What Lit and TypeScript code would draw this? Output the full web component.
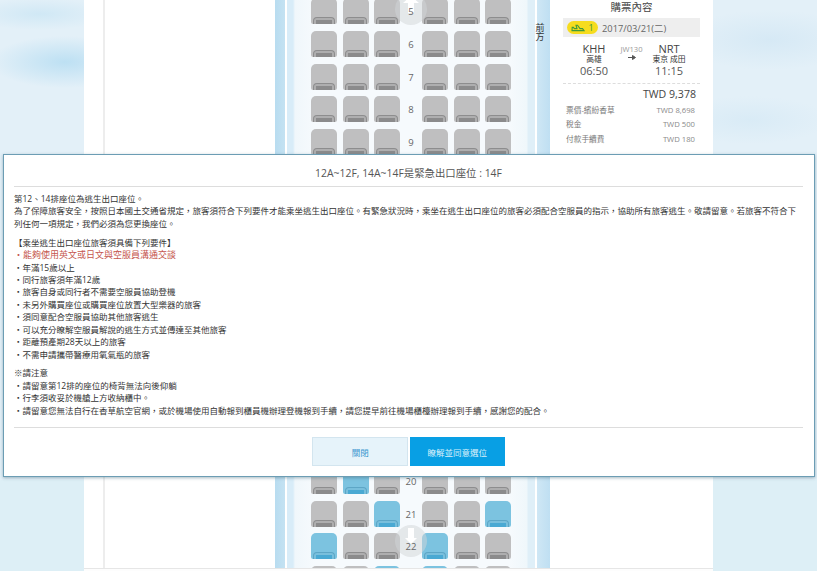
import { LitElement, html, css, svg } from "lit";
import { customElement } from "lit/decorators.js";

const BLUE: Record<number, number[]> = { 20: [1], 21: [2, 5], 22: [0, 3], 23: [2, 3] };
const UPPER_ROWS = [5, 6, 7, 8, 9];
const LOWER_ROWS = [20, 21, 22, 23];
const CJK = css`"Open Sans", "Noto Sans CJK TC", "Noto Sans", sans-serif`;

@customElement("seat-row")
class SeatRow extends LitElement {
  static properties = { row: { type: Number } };
  row = 0;
  static styles = css`
    :host { display: flex; height: 26px; padding-left: 36px; }
    .side { display: flex; gap: 5.5px; }
    .num { width: 22px; text-align: center; font: 9.5px/27px ${CJK}; color: #666; position: relative; z-index: 1; }
    .num span { position: relative; }
    .seat { width: 26px; height: 26px; background: #bfbfc0; border-radius: 5px 5px 2px 2px; position: relative; overflow: hidden; }
    .seat::before { content: ""; position: absolute; left: 2px; right: 2px; bottom: 0; height: 7px; border: 1px solid #8d8d8e; border-bottom: 0; border-radius: 4px 4px 0 0; box-sizing: border-box; background: #aeaeaf; }
    .seat::after { content: ""; position: absolute; left: 5px; right: 5px; bottom: 0; height: 4px; background: #8b8b8c; }
    .seat.free { background: #7cc3e0; }
    .seat.free::before { border-color: #5da6c6; background: #79bfdc; }
    .seat.free::after { background: #4aa9d3; }
    .exit { position: absolute; left: -5px; top: 50%; margin-top: -18px; width: 32px; height: 32px; display: block; }
    .exit.rear { margin-top: -21px; }
  `;
  seat(i: number) {
    const free = (BLUE[this.row] || []).includes(i);
    return html`<div class="seat ${free ? "free" : ""}"></div>`;
  }
  render() {
    const front = this.row === 5;
    const rear = this.row === 22;
    return html`
      <div class="side">${[0, 1, 2].map((i) => this.seat(i))}</div>
      <div class="num">
        ${front || rear
          ? html`<svg class="exit ${rear ? "rear" : ""}" viewBox="0 0 32 32">
              <circle cx="16" cy="16" r="16" fill="#d2d6d8" fill-opacity=".5"></circle>
              ${front
                ? svg`<path d="M16 3 L24 10 H19 V20 H13 V10 H8 Z" fill="#fff"></path>`
                : svg`<path d="M13 3 H19 V13 H22 L16 19 L10 13 H13 Z" fill="#fff"></path>`}
            </svg>`
          : ""}
        ${this.row < 23 ? html`<span>${this.row}</span>` : ""}
      </div>
      <div class="side">${[3, 4, 5].map((i) => this.seat(i))}</div>
    `;
  }
}

@customElement("app-root")
class AppRoot extends LitElement {
  static styles = css`
    :host { display: block; width: 817px; height: 571px; position: relative; overflow: hidden; background: #ddeff6; font-family: ${CJK}; }
    .sky { position: absolute; left: 0; right: 0; top: 0; height: 480px;
      background:
        radial-gradient(ellipse 75px 26px at 65px 62px, #bde0f3 0%, rgba(189,224,243,0) 100%),
        radial-gradient(ellipse 70px 16px at 40px 14px, #d0e8f5 0%, rgba(208,232,245,0) 100%),
        radial-gradient(ellipse 90px 30px at 770px 40px, #d6e9f5 0%, rgba(214,233,245,0) 100%),
        radial-gradient(ellipse 80px 24px at 750px 120px, #d9ebf6 0%, rgba(217,235,246,0) 100%),
        #e3f0f8; }
    .page { position: absolute; left: 84px; top: 0; width: 629px; height: 571px; background: #fff; display: flex; flex-direction: column; }
    .main { display: flex; height: 568px; overflow: hidden; }
    .foot { flex: 1; border-top: 1px solid #e6e6e6; background: #fdfdfd; }
    .left { width: 191px; flex: none; box-sizing: border-box; padding-left: 19px; }
    .left i { display: block; height: 100%; width: 1.5px; background: #ededed; }
    .cabin { width: 275px; flex: none; position: relative; box-sizing: border-box;
      background: linear-gradient(90deg, #b8dcf0 0, #c4e2f2 10px, #fff 10px, #fff 11.5px, #d8ecf8 12px, #d8ecf8 18px, #f0f7fb 20px, #f6fafd 40px, #f6fafd 235px, #eff7fb 252px, #dfeff8 253px, #dfeff8 260px, #fff 260.5px, #fff 261.5px, #cfe7f5 262px, #bfdff2 275px); }
    .rows { display: flex; flex-direction: column; gap: 6.67px; margin-top: -1.67px; }
    .covered { height: 299.66px; flex: none; }
    .front { position: absolute; left: 259px; top: 23px; width: 12px; font-size: 9px; line-height: 9px; color: #333; text-align: center; }
    .info { width: 163px; flex: none; box-sizing: border-box; padding: 0 13px; color: #555; }
    .info h2 { margin: 0; height: 18px; font-size: 10.5px; font-weight: 400; line-height: 14px; text-align: center; color: #444; }
    .dateline { height: 19px; background: #eee; display: flex; align-items: center; padding-left: 4px; gap: 4px; font-size: 9.3px; color: #666; }
    .pill { width: 31px; height: 13px; border-radius: 7px; background: #f6dc1e; display: flex; align-items: center; justify-content: center; gap: 3px; color: #3f9a3a; font-size: 9px; }
    .route { display: grid; grid-template-columns: 50px 1fr 50px; text-align: center; padding: 5px 6px 0; height: 41px; border-bottom: 1px dashed #ddd; box-sizing: content-box; }
    .code { font-size: 11px; line-height: 13px; color: #444; }
    .city { font-size: 7.8px; line-height: 9px; color: #333; }
    .time { font-size: 11px; line-height: 14px; color: #555; }
    .flight { font-size: 7.6px; line-height: 11px; color: #999; padding-top: 2px; white-space: nowrap; }
    .flight svg { display: block; margin: 0 auto; }
    .total { text-align: right; font-size: 10.6px; line-height: 14px; padding: 3px 4px 0 0; color: #444; height: 15.8px; box-sizing: content-box; }
    .fee { display: flex; justify-content: space-between; padding: 0 5px 0 3px; font-size: 7.7px; line-height: 14.4px; color: #777; }
    .fee b { font-weight: 400; color: #8a8a8a; }
    .modal { position: absolute; z-index: 5; left: 3px; top: 153.5px; width: 812px; height: 323px; box-sizing: border-box; background: #fff; border: 1px solid #6c9db4; box-shadow: 0 1px 3px rgba(60,100,120,.45); padding: 0 11px 0 10px; display: flex; flex-direction: column; }
    .title { height: 31px; flex: none; border-bottom: 1px solid #ddd; text-align: center; font-size: 10.4px; line-height: 36px; color: #555; }
    .body { flex: none; height: 241px; box-sizing: border-box; padding-top: 6.5px; font-size: 8.5px; line-height: 12.42px; color: #333; border-bottom: 1px solid #ddd; }
    .body p { margin: 0 0 6.5px; }
    .red { color: #c5564e; font-size: 9px; }
    .actions { display: flex; justify-content: center; gap: 1.5px; padding-top: 9.5px; }
    button { width: 95px; height: 29px; padding: 0; font: 8.5px ${CJK}; border: 0; box-sizing: border-box; }
    .close { width: 96px; background: #e6f3fa; border: 1px solid #d3e5ef; color: #3a97cf; }
    .ok { background: #089fe4; color: #d8f0fb; }
  `;
  render() {
    return html`
      <div class="sky"></div>
      <div class="page">
        <div class="main">
          <div class="left"><i></i></div>
          <div class="cabin">
            <div class="rows">
              ${UPPER_ROWS.map((r) => html`<seat-row .row=${r}></seat-row>`)}
              <div class="covered"></div>
              ${LOWER_ROWS.map((r) => html`<seat-row .row=${r}></seat-row>`)}
            </div>
            <div class="front">前<br />方</div>
          </div>
          <aside class="info">
            <h2>購票內容</h2>
            <div class="dateline">
              <span class="pill">
                <svg width="14" height="8" viewBox="0 0 14 8">
                  <path d="M1 6.6 H13 L11.5 4.6 H9 L6.5 1.2 H5 L6 4.6 H3.4 L2.4 3.4 H1.2 Z" fill="none" stroke="#3f9a3a" stroke-width="1.1"></path>
                </svg>
                1
              </span>
              <span>2017/03/21(二)</span>
            </div>
            <div class="route">
              <div>
                <div class="code">KHH</div>
                <div class="city">高雄</div>
                <div class="time">06:50</div>
              </div>
              <div class="flight">
                JW130
                <svg width="8" height="5" viewBox="0 0 8 5"><path d="M0 2.5 H6 M4.5 .5 L7.5 2.5 L4.5 4.5 Z" stroke="#555" fill="#555"></path></svg>
              </div>
              <div>
                <div class="code">NRT</div>
                <div class="city">東京 成田</div>
                <div class="time">11:15</div>
              </div>
            </div>
            <div class="total">TWD 9,378</div>
            <div class="fee"><span>票價-繽紛香草</span><b>TWD 8,698</b></div>
            <div class="fee"><span>稅金</span><b>TWD 500</b></div>
            <div class="fee"><span>付款手續費</span><b>TWD 180</b></div>
          </aside>
        </div>
        <div class="foot"></div>
      </div>
      <div class="modal" role="dialog">
        <div class="title">12A~12F, 14A~14F是緊急出口座位 : 14F</div>
        <div class="body">
          <p>第12、14排座位為逃生出口座位。<br />為了保障旅客安全，按照日本國土交通省規定，旅客須符合下列要件才能乘坐逃生出口座位。有緊急狀況時，乘坐在逃生出口座位的旅客必須配合空服員的指示，協助所有旅客逃生。敬請留意。若旅客不符合下列任何一項規定，我們必須為您更換座位。</p>
          <p>【乘坐逃生出口座位旅客須具備下列要件】<br />
            <span class="red">‧能夠使用英文或日文與空服員溝通交談</span><br />
            ‧年滿15歲以上<br />
            ‧同行旅客須年滿12歲<br />
            ‧旅客自身或同行者不需要空服員協助登機<br />
            ‧未另外購買座位或購買座位放置大型樂器的旅客<br />
            ‧須同意配合空服員協助其他旅客逃生<br />
            ‧可以充分瞭解空服員解說的逃生方式並傳達至其他旅客<br />
            ‧距離預產期28天以上的旅客<br />
            ‧不需申請攜帶醫療用氧氣瓶的旅客</p>
          <p>※請注意<br />
            ‧請留意第12排的座位的椅背無法向後仰躺<br />
            ‧行李須收妥於機艙上方收納櫃中。<br />
            ‧請留意您無法自行在香草航空官網，或於機場使用自動報到櫃員機辦理登機報到手續，請您提早前往機場櫃檯辦理報到手續，感謝您的配合。</p>
        </div>
        <div class="actions">
          <button class="close">關閉</button>
          <button class="ok">瞭解並同意選位</button>
        </div>
      </div>
    `;
  }
}
